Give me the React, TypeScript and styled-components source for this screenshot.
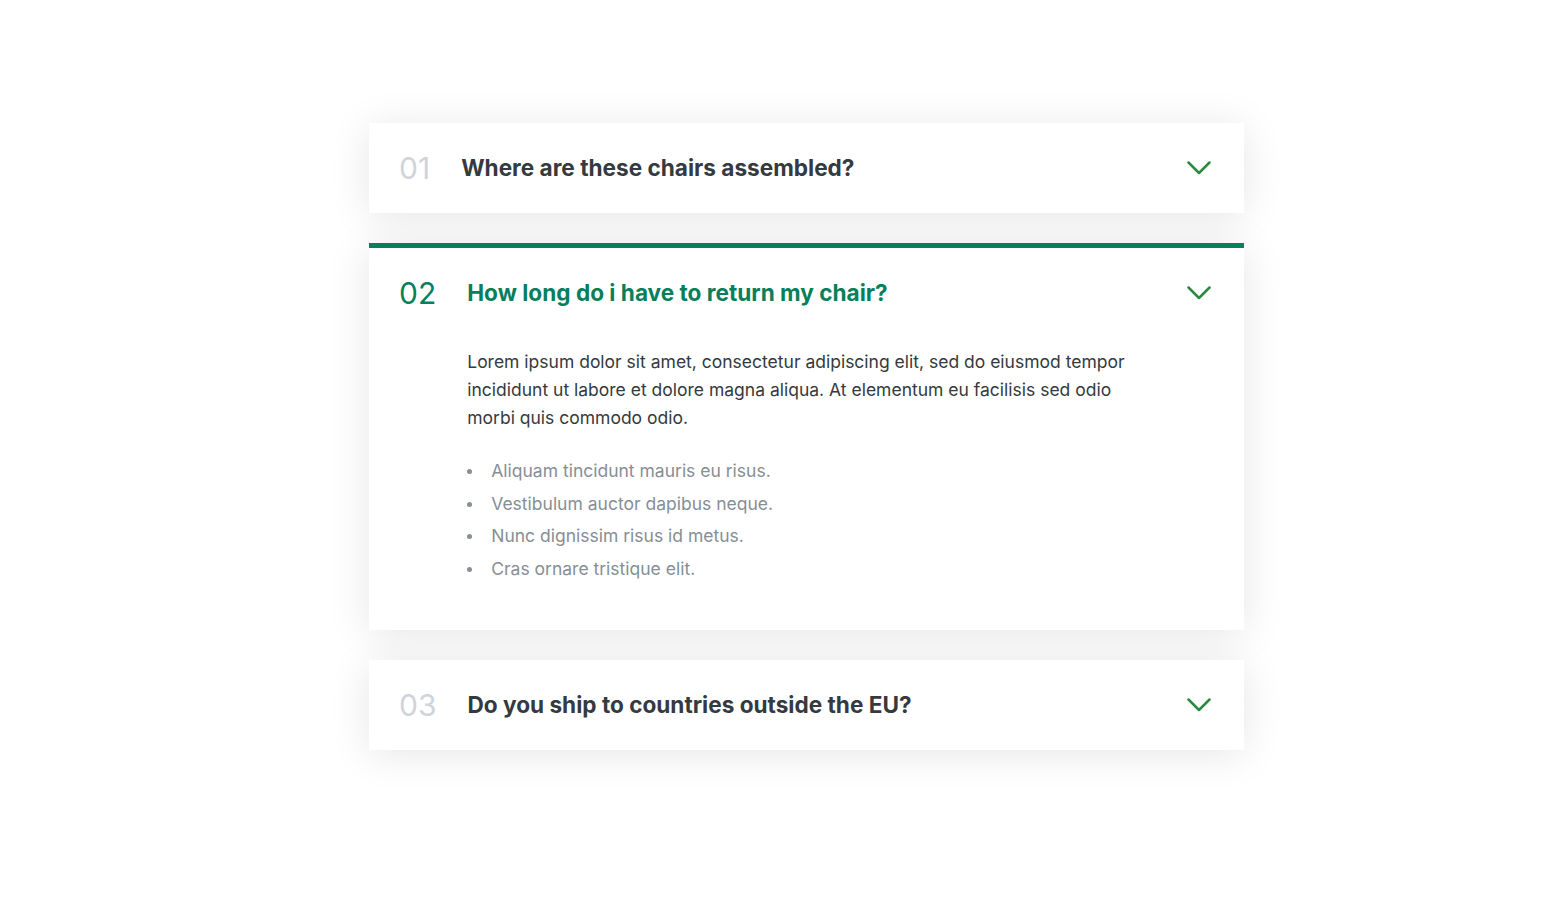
import styled, { createGlobalStyle } from "styled-components";

const GlobalStyle = createGlobalStyle`
  * {
    box-sizing: border-box;
    margin: 0;
    padding: 0;
  }
  body {
    font-family: Inter, "Noto Sans", sans-serif;
    background-color: #ffffff;
    color: #343a40;
  }
`;

const Page = styled.div`
  padding: 123px 0 80px 369px;
`;

const Accordion = styled.div`
  width: 875px;
  display: flex;
  flex-direction: column;
  gap: 30px;
`;

const Item = styled.div<{ $open?: boolean }>`
  display: grid;
  grid-template-columns: auto 1fr auto;
  column-gap: 31px;
  row-gap: 34px;
  align-items: center;
  padding: ${(p) => (p.$open ? "24px 33px 47px 30px" : "24px 33px 24px 30px")};
  background-color: #ffffff;
  border-top: ${(p) => (p.$open ? "5px solid #087f5b" : "none")};
  box-shadow: 0 4px 40px rgba(0, 0, 0, 0.1);
`;

const Number = styled.p<{ $open?: boolean }>`
  font-size: 30px;
  line-height: 42px;
  font-weight: 400;
  color: ${(p) => (p.$open ? "#087f5b" : "#ced4da")};
`;

const Title = styled.p<{ $open?: boolean }>`
  font-size: 22.6px;
  line-height: 42px;
  font-weight: 700;
  color: ${(p) => (p.$open ? "#087f5b" : "#343a40")};
`;

const Chevron = styled.svg`
  width: 24px;
  height: 24px;
  stroke: #2b8a3e;
  fill: none;
  stroke-width: 2.5;
  stroke-linecap: round;
  stroke-linejoin: round;
`;

const Content = styled.div`
  grid-column: 2 / 3;
`;

const Text = styled.p`
  font-size: 17.5px;
  line-height: 28px;
  color: #343a40;
  margin-bottom: 25px;
`;

const List = styled.ul`
  list-style: none;
  display: flex;
  flex-direction: column;
  gap: 4px;
`;

const ListItem = styled.li`
  position: relative;
  padding-left: 24px;
  font-size: 17.5px;
  line-height: 28.5px;
  color: #868e96;

  &::before {
    content: "";
    position: absolute;
    left: 0;
    top: 12px;
    width: 5px;
    height: 5px;
    border-radius: 50%;
    background-color: #868e96;
  }
`;

type Faq = {
  num: string;
  title: string;
  open?: boolean;
};

const faqs: Faq[] = [
  { num: "01", title: "Where are these chairs assembled?" },
  { num: "02", title: "How long do i have to return my chair?", open: true },
  { num: "03", title: "Do you ship to countries outside the EU?" },
];

export default function App() {
  return (
    <>
      <GlobalStyle />
      <Page>
        <Accordion>
          {faqs.map((f) => (
            <Item key={f.num} $open={f.open}>
              <Number $open={f.open}>{f.num}</Number>
              <Title $open={f.open}>{f.title}</Title>
              <Chevron viewBox="0 0 24 24">
                <path d="M1.5 6.5l10.5 10.5 10.5-10.5" />
              </Chevron>
              {f.open && (
                <Content>
                  <Text>
                    Lorem ipsum dolor sit amet, consectetur adipiscing elit, sed
                    do eiusmod tempor incididunt ut labore et dolore magna
                    aliqua. At elementum eu facilisis sed odio morbi quis
                    commodo odio.
                  </Text>
                  <List>
                    <ListItem>Aliquam tincidunt mauris eu risus.</ListItem>
                    <ListItem>Vestibulum auctor dapibus neque.</ListItem>
                    <ListItem>Nunc dignissim risus id metus.</ListItem>
                    <ListItem>Cras ornare tristique elit.</ListItem>
                  </List>
                </Content>
              )}
            </Item>
          ))}
        </Accordion>
      </Page>
    </>
  );
}
